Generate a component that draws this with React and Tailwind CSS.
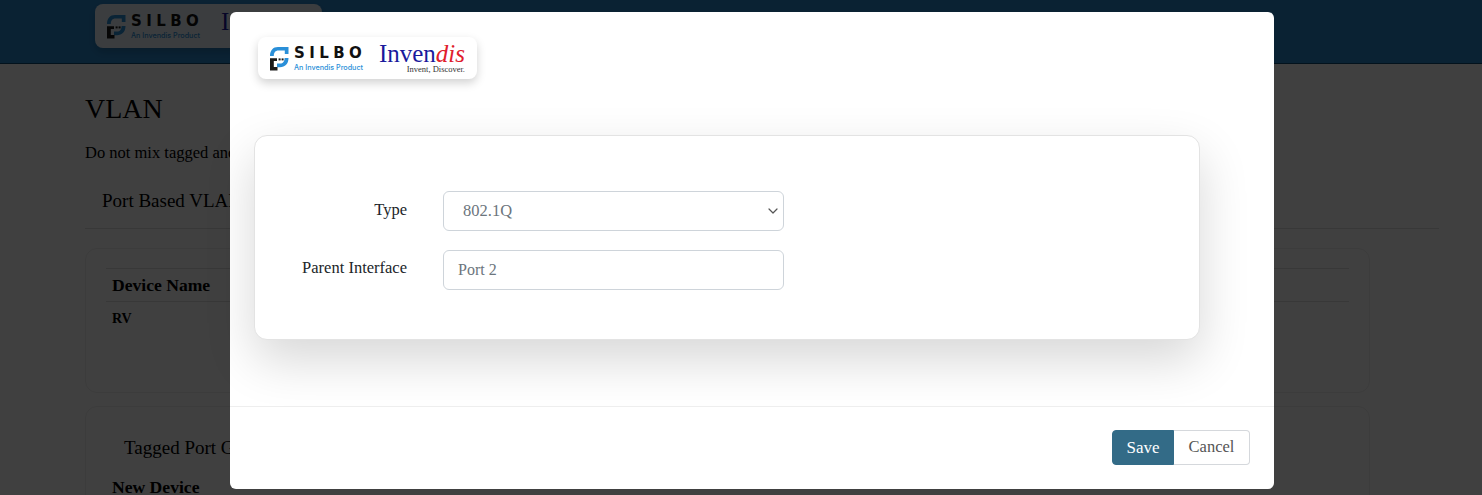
import React from "react";
import { ChevronDown } from "lucide-react";

function BrandLogo({ className = "" }) {
  return (
    <div className={`flex items-center bg-white rounded-[8px] shadow-[0_4px_10px_rgba(0,0,0,0.18)] ${className}`}>
      {/* S mark */}
      <svg viewBox="0 0 20 25" className="w-[20px] h-[25px] ml-[11px] shrink-0">
        <path d="M19.5 1H9C4 1 1 4.4 1 10H4.8C4.8 6.8 6.4 4.6 9.4 4.6H15.8V8H19.5Z" fill="#2a8fd8" />
        <path d="M19.5 12C19.5 18 16 21.2 11 21.2H8V17.6H11C14 17.6 15.6 15.4 15.6 12Z" fill="#2a8fd8" />
        <path d="M1 12.2H8V15H4.8V21H8.5V24.4H1Z" fill="#1a1a1a" />
        <rect x="9.6" y="12.4" width="2" height="2" fill="#1a1a1a" />
        <rect x="12.6" y="12.4" width="2" height="2" fill="#1a1a1a" />
      </svg>
      <div className="ml-[5px] w-[75px] pt-[2px] flex flex-col gap-[2px] font-['Inter',sans-serif]">
        <span className="font-['DejaVu_Sans',sans-serif] text-[15px] leading-[15px] font-bold tracking-[4.4px] text-[#111]">SILBO</span>
        <span className="text-[7.2px] leading-[9px] font-medium text-[#2a8fd8] whitespace-nowrap">An Invendis Product</span>
      </div>
      <div className="ml-auto flex flex-col items-end font-['Liberation_Serif',serif]">
        <span className="text-[25px] leading-[23px] text-[#1a1a9c] whitespace-nowrap">
          Inven<span className="italic text-[#e0202c]">dis</span>
        </span>
        <span className="text-[8.5px] leading-[9px] text-[#333] whitespace-nowrap">Invent, Discover.</span>
      </div>
    </div>
  );
}

function Page() {
  return (
    <div className="bg-white">
      <header className="h-[64px] bg-[#2a88cc] border-b border-[#0f4a70] pl-[95px] pt-[4px]">
        <BrandLogo className="w-[227px] h-[44px] pr-[15px] bg-white/90" />
      </header>
      <main className="pl-[85px] pr-[43px] text-black">
        <h1 className="text-[28px] leading-[34px] mt-[28px]">VLAN</h1>
        <p className="text-[16.5px] mt-[15px] whitespace-nowrap">Do not mix tagged and untagged ports</p>
        <div className="border-b border-[#ddd] h-[57px] mt-[6px] pl-[17px] pt-[15px] text-[19px]">Port Based VLAN</div>
        <section className="mt-[19px] w-[1285px] h-[145px] border border-[#eee] rounded-[12px] px-[20px] pt-[19px]">
          <div className="border-y border-[#ddd] h-[34px] pl-[6px] flex items-center text-[17.6px] font-bold">Device Name</div>
          <div className="pl-[6px] pt-[6px] text-[14px] font-bold">RV</div>
        </section>
        <section className="mt-[13px] w-[1285px] h-[145px] border border-[#eee] rounded-[12px] px-[26px]">
          <div className="pl-[12px] pt-[27px] text-[19px]">Tagged Port Group</div>
          <div className="pt-[12px] text-[17.6px] font-bold">New Device</div>
        </section>
      </main>
    </div>
  );
}

export default function App() {
  return (
    <div className="relative h-[495px] overflow-hidden font-['Liberation_Serif',serif]">
      <Page />
      <div className="absolute inset-0 bg-black/75 flex justify-center pt-[12px] pl-[22px]">
        <div className="w-[1044px] h-[477px] bg-white rounded-[6px] flex flex-col">
          <div className="flex-1 pl-[24px]">
            <BrandLogo className="w-[219px] h-[42px] pr-[12px] mt-[25px] ml-[4px]" />
            <div className="mt-[56px] w-[946px] h-[205px] border border-[#e3e3e3] rounded-[13px] bg-white shadow-[0_20px_50px_rgba(0,0,0,0.16)] pt-[55px] pl-[20px]">
              <div className="flex items-center h-[40px]">
                <label className="w-[132px] text-right text-[16.5px] text-[#212529] -mt-[2px]">Type</label>
                <div className="relative ml-[36px] w-[341px]">
                  <select className="appearance-none w-full h-[40px] border border-[#ced4da] rounded-[6px] pl-[19px] text-[16.5px] text-[#6c757d] bg-white">
                    <option>802.1Q</option>
                  </select>
                  <ChevronDown className="absolute right-[3px] top-[12px] w-[16px] h-[16px] text-[#555]" strokeWidth={1.8} />
                </div>
              </div>
              <div className="flex items-center h-[40px] mt-[19px]">
                <label className="w-[132px] text-right text-[16.5px] text-[#212529] -mt-[4px]">Parent Interface</label>
                <input
                  readOnly
                  value="Port 2"
                  className="ml-[36px] w-[341px] h-[40px] border border-[#ced4da] rounded-[6px] pl-[14px] text-[16px] text-[#6c757d] bg-white"
                />
              </div>
            </div>
          </div>
          <div className="h-[83px] border-t border-[#eee] flex justify-end items-start pt-[23px] pr-[24px]">
            <button className="w-[62px] h-[35px] bg-[#336b87] border border-[#336b87] rounded-l-[4px] text-white text-[17px]">Save</button>
            <button className="w-[76px] h-[35px] border border-l-0 border-[#d5d8dc] rounded-r-[4px] text-[#555] text-[16.5px]">Cancel</button>
          </div>
        </div>
      </div>
    </div>
  );
}
